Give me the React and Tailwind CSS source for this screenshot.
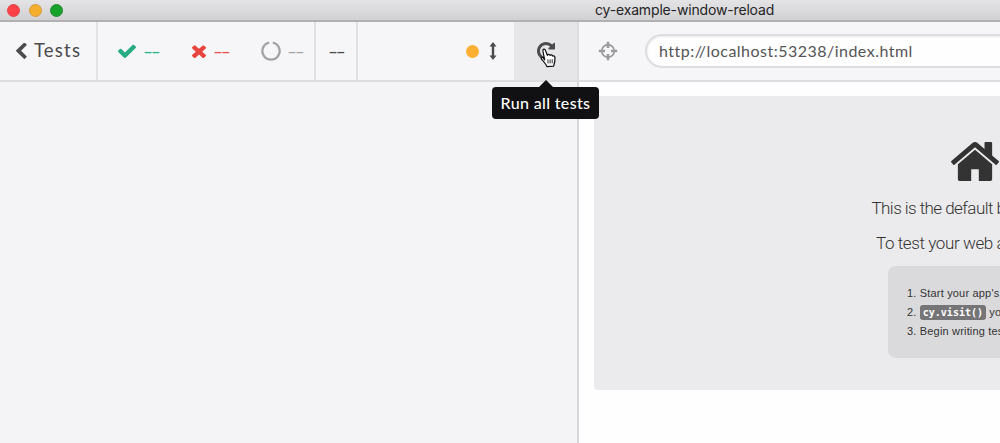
const CHEVRON = "M1427 301l-531 531 531 531q19 19 19 45t-19 45l-166 166q-19 19-45 19t-45-19l-742-742q-19-19-19-45t19-45l742-742q19-19 45-19t45 19l166 166q19 19 19 45t-19 45z";
const CHECK = "M1671 566q0 40-28 68l-724 724-136 136q-28 28-68 28t-68-28l-136-136-362-362q-28-28-28-68t28-68l136-136q28-28 68-28t68 28l294 295 656-657q28-28 68-28t68 28l136 136q28 28 28 68z";
const TIMES = "M1490 1322q0 40-28 68l-136 136q-28 28-68 28t-68-28l-294-294-294 294q-28 28-68 28t-68-28l-136-136q-28-28-28-68t28-68l294-294-294-294q-28-28-28-68t28-68l136-136q28-28 68-28t68 28l294 294 294-294q28-28 68-28t68 28l136 136q28 28 28 68t-28 68l-294 294 294 294q28 28 28 68z";
const REPEAT = "M1664 256v448q0 26-19 45t-45 19h-448q-42 0-59-40-17-39 14-69l138-138q-148-137-349-137-104 0-198.500 40.500t-163.500 109.500-109.500 163.500-40.500 198.500 40.500 198.500 109.500 163.500 163.500 109.500 198.500 40.500q119 0 225-52t179-147q7-10 23-12 15 0 25 9l137 138q9 8 9.500 20.500t-7.500 22.500q-109 132-264 204.500t-327 72.500q-156 0-298-61t-245-164-164-245-61-298 61-298 164-245 245-164 298-61q147 0 284.500 55.500t244.500 156.500l130-129q29-31 70-14 39 17 39 59z";
const HOME = "M1472 992v480q0 26-19 45t-45 19h-384v-384h-256v384h-384q-26 0-45-19t-19-45v-480q0-1 .5-3t.5-3l575-474 575 474q1 2 1 6zm223-69l-62 74q-8 9-21 11h-3q-13 0-21-7l-692-577-692 577q-12 8-24 7-13-2-21-11l-62-74q-8-10-7-23.5t11-21.5l719-599q32-26 76-26t76 26l244 204v-195q0-14 9-23t23-9h192q14 0 23 9t9 23v408l219 182q10 8 11 21.5t-7 23.5z";

function Glyph({ d, box = "0 0 1792 1792", className }) {
  return (
    <svg viewBox={box} preserveAspectRatio="none" className={`shrink-0 fill-current ${className}`} aria-hidden="true">
      <path d={d} />
    </svg>
  );
}

function Dashes({ className = "" }) {
  return <span className={`block w-[14px] origin-left scale-x-[1.500] pb-[1px] text-[18px] leading-none tracking-[-1.600px] ${className}`}>--</span>;
}

function Pointer() {
  return (
    <svg viewBox="0 0 18 22" className="absolute left-[25px] top-[25px] h-[21px] w-[18px]" aria-hidden="true">
      <path
        d="M5.5 13.500 L3.700 4.500 C3.200 2.100 5.500 1.300 6.300 3.500 L8.300 8.700 C8.900 7.300 10.800 7.500 11.100 8.800 C12 7.800 13.500 8.200 13.800 9.500 C15 8.800 16.200 9.500 16.300 11 C16.500 14 16.200 16 14.900 20 L7.800 20.500 C7 18 4.500 15.500 2.300 12.900 C1 11.300 2.500 10.100 4 11.400 Z"
        fill="#fff"
        stroke="#111"
        strokeWidth="1.300"
        strokeLinejoin="round"
      />
      <path d="M9 13v4.200M11.200 13v4.200M13.400 12.800v4.200" stroke="#222" strokeWidth="1" />
    </svg>
  );
}

function Toolbar() {
  return (
    <div className="flex h-[60px] border-b-2 border-[#dddcdf] bg-[#f6f5f7] text-[#4b4a4c]">
      <div className="flex w-[98px] items-center border-r-2 border-[#e3e2e5] pl-[16px]">
        <Glyph d={CHEVRON} box="410 70 1056 1568" className="h-[16px] w-[11px]" />
        <span className="ml-[7px] whitespace-nowrap pb-[2px] font-['Lato',sans-serif] text-[18.500px] leading-[22px] tracking-[1.200px]">Tests</span>
      </div>
      <div className="flex w-[218px] items-center border-r-2 border-[#e0dfe2] font-['Lato',sans-serif]">
        <Glyph d={CHECK} box="121 270 1550 1252" className="ml-[20px] h-[14px] w-[18px] text-[#26ab83]" />
        <Dashes className="ml-[7px] text-[#26b58c]" />
        <Glyph d={TIMES} box="302 238 1188 1316" className="ml-[35px] h-[14px] w-[14px] text-[#e9453e]" />
        <Dashes className="ml-[7px] text-[#ee4f4a]" />
        <svg viewBox="0 0 20 20" className="ml-[34px] h-[20px] w-[20px] shrink-0" aria-hidden="true">
          <path d="M11.800 1.600A8.600 8.600 0 1 1 8.200 1.600" fill="none" stroke="#a3a2a4" strokeWidth="2.300" />
        </svg>
        <Dashes className="ml-[6px] text-[#a8a7a9]" />
      </div>
      <div className="flex w-[42px] items-center border-r-2 border-[#e0dfe2] pl-[12px] font-['Lato',sans-serif]">
        <Dashes />
      </div>
      <div className="flex w-[156px] items-center pl-[108px]">
        <span className="size-[13px] rounded-full bg-[#fbb034]" />
        <svg viewBox="0 0 8 18" className="ml-[10px] h-[18px] w-[8px]" aria-hidden="true">
          <path d="M4 0 7.500 4.500H5.200V13.500H7.500L4 18 .5 13.500H2.800V4.500H.5Z" fill="#4b4a4c" />
        </svg>
      </div>
      <div className="relative flex w-[65px] items-center justify-center border-r-2 border-[#dcdbde] bg-[#e6e5e7]">
        <Glyph d={REPEAT} box="128 128 1536 1536" className="h-[18px] w-[18px] text-[#4b4a4c]" />
        <Pointer />
        <div className="absolute -left-[22px] top-[58px] z-10 flex w-[107px] flex-col items-center">
          <svg viewBox="0 0 14 7" className="h-[7px] w-[14px]" aria-hidden="true">
            <path d="M0 7 7 0l7 7Z" fill="#111012" />
          </svg>
          <div className="flex h-[32px] w-[107px] items-center justify-center whitespace-nowrap rounded-[4px] bg-[#111012] font-['Lato',sans-serif] text-[16px] font-medium tracking-[0.350px] text-white">
            Run all tests
          </div>
        </div>
      </div>
      <div className="flex min-w-0 flex-1 items-center pl-[19px]">
        <svg viewBox="0 0 20 20" className="h-[20px] w-[20px] shrink-0" aria-hidden="true">
          <circle cx="10" cy="10" r="6.300" fill="none" stroke="#9b9a9c" strokeWidth="1.700" />
          <path d="M10 .8V7M10 13v6.200M.8 10H7M13 10h6.200" fill="none" stroke="#9b9a9c" strokeWidth="2.600" />
        </svg>
        <div className="ml-[27px] flex h-[34px] w-[420px] shrink-0 items-center rounded-full border-2 border-[#dddce0] bg-[#fefefe] pl-[12px] shadow-[inset_0_1px_2px_#e8e8ea]">
          <span className="font-['Lato',sans-serif] text-[16px] tracking-[0.480px] text-[#555456]">http://localhost:53238/index.html</span>
        </div>
      </div>
    </div>
  );
}

export default function App() {
  return (
    <div className="flex h-[443px] w-[1000px] flex-col overflow-hidden bg-[#f4f3f5] text-[#333]">
      <div className="flex h-[22px] shrink-0 items-center gap-[8.500px] border-b-2 border-[#b2b0b2] bg-linear-to-b from-[#e4e3e5] to-[#d1d0d2] pl-[7px]">
        <span className="size-[13px] rounded-full border border-[#dc4a4b] bg-[#fc4148]" />
        <span className="size-[13px] rounded-full border border-[#d69c3e] bg-[#f5ae2e]" />
        <span className="size-[13px] rounded-full border border-[#268a34] bg-[#17a22b]" />
        <span className="ml-[523.500px] whitespace-nowrap font-['Inter',sans-serif] text-[14px] leading-[20px] tracking-[-0.160px] text-[#252426]">cy-example-window-reload</span>
      </div>
      <Toolbar />
      <div className="flex min-h-0 flex-1">
        <div className="w-[579px] shrink-0 border-r-2 border-[#d6d5d8]" />
        <div className="flex-1 overflow-hidden bg-[#fefdff] pl-[15px] pt-[14px]">
          <div className="flex h-[294px] w-[762px] flex-col items-center rounded-[4px] bg-[#ebebed] pt-[46px]">
            <Glyph d={HOME} box="89 253 1614 1283" className="h-[39px] w-[48px] text-[#333]" />
            <p className="mt-[15px] w-[207px] whitespace-nowrap font-['Roboto',sans-serif] text-[17px] font-light leading-[24px] tracking-[-0.560px]">This is the default blank page.</p>
            <p className="mt-[11px] w-[198px] whitespace-nowrap font-['Roboto',sans-serif] text-[17px] font-light leading-[24px] tracking-[-0.400px]">To test your web application:</p>
            <ol className="mt-[11px] h-[92px] w-[174px] whitespace-nowrap rounded-[8px] bg-[#dadadc] pl-[19px] pt-[18px] font-['Liberation_Sans',sans-serif] text-[11px] leading-[19px] tracking-[0.180px]">
              <li>1. Start your app's server</li>
              <li>
                2. <code className="rounded-[3px] bg-[#757476] px-[3px] py-[2px] font-['DejaVu_Sans_Mono',monospace] text-[10px] font-bold tracking-normal text-white">cy.visit()</code> your app
              </li>
              <li>3. Begin writing tests</li>
            </ol>
          </div>
        </div>
      </div>
    </div>
  );
}
